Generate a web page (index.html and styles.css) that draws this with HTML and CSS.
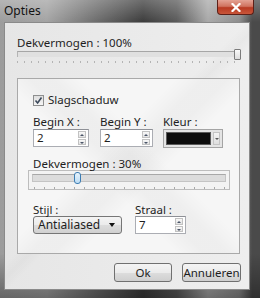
FILE: index.html
```html
<!DOCTYPE html>
<html lang="nl">
<head>
	<meta charset="UTF-8">
	<title>Opties</title>
	<link rel="stylesheet" href="styles.css">
</head>
<body>
	<div class="window">
		<div class="titlebar">
			<span class="title">Opties</span>
			<span class="close">
				<svg width="10" height="9" viewBox="0 0 10 9"><path d="M1.5 1 L8.5 8 M8.5 1 L1.5 8" stroke="#fff" stroke-width="2.2" stroke-linecap="square"/></svg>
			</span>
		</div>
		<div class="client">
			<div class="label">Dekvermogen : 100%</div>
			<div class="slider-main">
				<div class="groove"><span class="grip"></span></div>
				<div class="ticks"></div>
			</div>

			<div class="panel">
				<div class="check">
					<span class="box">
						<svg width="9" height="9" viewBox="0 0 9 9"><path d="M1.5 4.5 L3.6 7 L7.5 1.5" fill="none" stroke="#3d4a5c" stroke-width="1.6"/></svg>
					</span>
					Slagschaduw
				</div>

				<div class="fields">
					<div class="field fx">
						<div class="lbl">Begin X :</div>
						<div class="spin"><span class="val">2</span><span class="arrows"><i class="up"></i><i class="down"></i></span></div>
					</div>
					<div class="field fy">
						<div class="lbl">Begin Y :</div>
						<div class="spin"><span class="val">2</span><span class="arrows"><i class="up"></i><i class="down"></i></span></div>
					</div>
					<div class="field fk">
						<div class="lbl">Kleur :</div>
						<div class="color"><span class="swatch"></span><span class="drop"><i></i></span></div>
					</div>
				</div>

				<div class="lbl lbl-op">Dekvermogen : 30%</div>
				<div class="slider-box">
					<div class="groove2"><span class="grip2"></span></div>
					<div class="ticks2"></div>
				</div>

				<div class="fields bottom">
					<div class="field fs">
						<div class="lbl">Stijl :</div>
						<div class="select">Antialiased<i></i></div>
					</div>
					<div class="field fr">
						<div class="lbl">Straal :</div>
						<div class="spin"><span class="val">7</span><span class="arrows"><i class="up"></i><i class="down"></i></span></div>
					</div>
				</div>
			</div>

			<div class="buttons">
				<div class="btn">Ok</div>
				<div class="btn">Annuleren</div>
			</div>
		</div>
	</div>
</body>
</html>
```

FILE: styles.css
```css
body{
	margin:0;
	font-family:"Noto Sans",sans-serif;
	font-size:11.5px;
	color:#1e1e1e;
}
.window{
	width:260px;
	height:298px;
	display:flex;
	flex-direction:column;
	background:
		linear-gradient(180deg,rgba(0,0,0,0) 85%,rgba(0,0,0,.35) 100%),
		linear-gradient(90deg,#9c9c9c 0,#a3a3a3 18%,#6a6a6a 38%,#3c3c3c 55%,#5a5a5a 68%,#a9a9a9 80%,#8d8d8d 92%,#4a4a4a 97%);
}
.titlebar{
	height:22px;
	display:flex;
	justify-content:space-between;
	align-items:flex-start;
	background:linear-gradient(180deg,rgba(255,255,255,.25),rgba(255,255,255,0));
}
.title{
	margin:4px 0 0 4px;
	line-height:14px;
	font-size:12px;
	color:#111;
}
.close{
	width:37px;
	height:15px;
	margin-right:6px;
	display:flex;
	align-items:center;
	justify-content:center;
	border:1px solid #5d2018;
	border-top:none;
	border-radius:0 0 4px 4px;
	background:linear-gradient(180deg,#e4a294 0,#d0735f 45%,#b83a22 55%,#c9563a 100%);
	box-sizing:border-box;
}
.client{
	flex:1;
	margin:0 10px 8px 4px;
	padding:13px 9px 0 12px;
	border:1px solid #8a8a8a;
	background:
		linear-gradient(135deg,rgba(0,0,0,0) 47%,rgba(0,0,0,.025) 50%,rgba(0,0,0,0) 53%),
		linear-gradient(90deg,#e6e6e6,#eeeeee);
}
.label{
	line-height:14px;
}
.slider-main{
	height:27px;
}
.groove{
	position:relative;
	margin-top:1px;
	height:6px;
	margin-right:2px;
	border-top:1px solid #a6a6a6;
	border-left:1px solid #b4b4b4;
	background:#e0e0e0;
	box-sizing:border-box;
}
.grip{
	position:absolute;
	right:-3px;
	top:-3px;
	width:5px;
	height:9px;
	border:1px solid #7c7c7c;
	border-radius:1px;
	background:linear-gradient(180deg,#fafafa,#dcdcdc);
}
.ticks{
	margin-top:4px;
	height:2px;
	background:repeating-linear-gradient(90deg,#b4b4b4 0,#b4b4b4 1px,transparent 1px,transparent 7px);
}
.panel{
	height:174px;
	padding:0 0 0 10px;
	border:1px solid #a9a9a9;
	background:
		linear-gradient(45deg,rgba(0,0,0,0) 40%,rgba(0,0,0,.03) 47%,rgba(0,0,0,.03) 53%,rgba(0,0,0,0) 60%),
		linear-gradient(135deg,rgba(0,0,0,0) 40%,rgba(0,0,0,.03) 47%,rgba(0,0,0,.03) 53%,rgba(0,0,0,0) 60%),
		#f6f6f6;
}
.check{
	margin:14px 0 0 5px;
	height:14px;
	line-height:14px;
	display:flex;
	align-items:center;
	gap:4px;
}
.box{
	width:11px;
	height:11px;
	border:1px solid #8e8f8f;
	box-sizing:border-box;
	background:linear-gradient(180deg,#dedede,#f6f6f6);
	display:flex;
	align-items:center;
	justify-content:center;
}
.fields{
	margin:8px 0 0 5px;
	display:flex;
}
.lbl{
	line-height:14px;
}
.field.fx{width:67px;}
.field.fy{width:63px;}
.field.fs{width:102px;}
.spin{
	height:18px;
	display:flex;
	border:1px solid #abadb3;
	border-top-color:#8e9096;
	background:#fff;
	box-sizing:border-box;
}
.fx .spin{width:56px;}
.fy .spin{width:53px;}
.fr .spin{width:51px;}
.val{
	flex:1;
	padding-left:3px;
	line-height:16px;
}
.arrows{
	width:8px;
	margin:1px 2px 1px 0;
	display:flex;
	flex-direction:column;
	gap:1px;
}
.arrows i{
	flex:1;
	border:1px solid #c2c2c2;
	background:linear-gradient(180deg,#f8f8f8,#e3e3e3);
	position:relative;
}
.arrows i:after{
	content:"";
	position:absolute;
	left:1px;
	top:2px;
	border-left:2px solid transparent;
	border-right:2px solid transparent;
}
.arrows .up:after{border-bottom:2px solid #4a5568;}
.arrows .down:after{border-top:2px solid #4a5568;}
.color{
	width:60px;
	height:19px;
	display:flex;
	padding:2px;
	gap:2px;
	border:1px solid #a4a4a4;
	background:#e4e4e4;
	box-sizing:border-box;
}
.swatch{
	width:43px;
	background:#0c0c0c;
	border:1px solid #5a5a5a;
}
.drop{
	flex:1;
	border:1px solid #c4c4c4;
	background:linear-gradient(180deg,#f4f4f4,#dedede);
	display:flex;
	align-items:center;
	justify-content:center;
}
.drop i{
	border-left:2px solid transparent;
	border-right:2px solid transparent;
	border-top:2px solid #5a5a5a;
}
.lbl-op{
	margin:10px 0 0 5px;
	line-height:12px;
}
.slider-box{
	width:202px;
	height:20px;
	padding:3px 3px 0;
	border:1px solid #bdbdbd;
	box-sizing:border-box;
	background:#f3f3f3;
}
.groove2{
	position:relative;
	height:6px;
	border:1px solid #c4c4c4;
	border-top-color:#a8a8a8;
	background:#dcdcdc;
}
.grip2{
	position:absolute;
	left:41px;
	top:-3px;
	width:5px;
	height:10px;
	border:1px solid #3d7db3;
	border-radius:3px;
	background:linear-gradient(180deg,#e8f4fc,#bcdcf4);
}
.ticks2{
	margin-top:5px;
	height:2px;
	background:repeating-linear-gradient(90deg,#a8a8a8 0,#a8a8a8 1px,transparent 1px,transparent 10px);
	background-position:2px 0;
}
.fields.bottom{
	margin-top:14px;
}
.bottom .lbl{
	line-height:12px;
}
.select{
	width:89px;
	height:18px;
	padding-left:4px;
	line-height:16px;
	font-size:12px;
	display:flex;
	align-items:center;
	justify-content:space-between;
	border:1px solid #767676;
	border-radius:3px;
	background:linear-gradient(180deg,#f4f4f4 0,#ebebeb 50%,#dddddd 51%,#d0d0d0 100%);
	box-sizing:border-box;
}
.select i{
	margin-right:6px;
	border-left:3px solid transparent;
	border-right:3px solid transparent;
	border-top:4px solid #111;
}
.buttons{
	margin:9px -1px 0 0;
	display:flex;
	justify-content:flex-end;
	gap:10px;
}
.btn{
	width:58px;
	height:19px;
	line-height:17px;
	text-align:center;
	border:1px solid #707070;
	border-radius:3px;
	background:linear-gradient(180deg,#f4f4f4 0,#ebebeb 50%,#dddddd 51%,#cfcfcf 100%);
	box-sizing:border-box;
}
.btn + .btn{
	width:59px;
}
```
